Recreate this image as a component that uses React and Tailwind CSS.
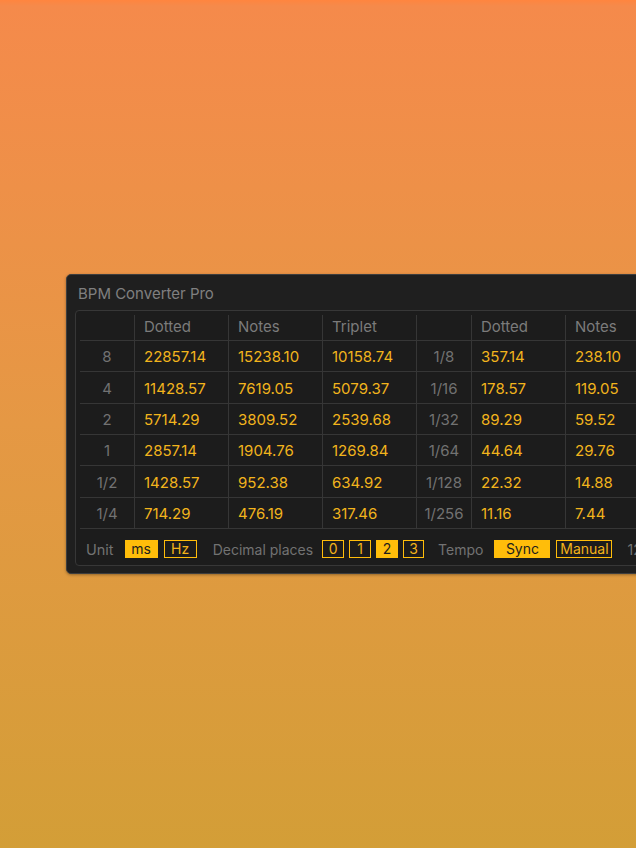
import React from "react";

const FONT = { fontFamily: "Inter, 'Noto Sans', 'Liberation Sans', sans-serif" };

const headers = ["", "Dotted", "Notes", "Triplet", "", "Dotted", "Notes", "Triplet"];

const rows = [
  ["8", "22857.14", "15238.10", "10158.74", "1/8", "357.14", "238.10", "158.73"],
  ["4", "11428.57", "7619.05", "5079.37", "1/16", "178.57", "119.05", "79.37"],
  ["2", "5714.29", "3809.52", "2539.68", "1/32", "89.29", "59.52", "39.68"],
  ["1", "2857.14", "1904.76", "1269.84", "1/64", "44.64", "29.76", "19.84"],
  ["1/2", "1428.57", "952.38", "634.92", "1/128", "22.32", "14.88", "9.92"],
  ["1/4", "714.29", "476.19", "317.46", "1/256", "11.16", "7.44", "4.96"],
];

const isLabel = (i) => i === 0 || i === 4;

function Toggle({ on, children, w }) {
  return (
    <div
      className={
        "flex h-[18px] items-center justify-center border-[1.5px] border-[#ffbd0a] text-[14px] leading-none " +
        w +
        (on ? " bg-[#ffbd0a] text-[#1d1d1d]" : " text-[#f2b31a]")
      }
    >
      {children}
    </div>
  );
}

export default function App() {
  return (
    <div
      style={FONT}
      className="flex min-h-[848px] w-full overflow-hidden bg-[linear-gradient(to_bottom,#ff853f_0px,#f58a4b_6px,#e59844_50%,#d39e37_100%)] pl-[66px] pt-[274px]"
    >
      <div className="h-[300px] w-[760px] shrink-0 rounded-[5px] border border-[#3e3e3e] bg-[#1f1f1f] shadow-[0_1px_3px_rgba(0,0,0,0.35)]">
        <div className="flex h-[35px] items-center pl-[11px] pt-[3px] text-[15px] text-[#808080]">
          BPM Converter Pro
        </div>
        <div className="ml-[8px] h-[256px] rounded-[4px] border border-[#373737] bg-[#1c1c1c] px-[4px] pt-[4px]">
          <div className="grid grid-cols-[55px_94px_94px_94px_55px_94px_94px_94px]">
            {headers.map((h, i) => (
              <div
                key={"h" + i}
                className={
                  "flex h-[26px] items-center border-b border-r border-[#363636] text-[15px] text-[#7b7b7b] " +
                  (isLabel(i) ? "justify-center" : "pl-[9px]")
                }
              >
                {h}
              </div>
            ))}
            {rows.map((r, ri) =>
              r.map((c, ci) => (
                <div
                  key={ri + "-" + ci}
                  className={
                    "flex h-[31.33px] items-center border-b border-r border-[#363636] pt-[3px] text-[15px] " +
                    (isLabel(ci) ? "justify-center text-[#727272]" : "pl-[9px] text-[#f2b41c]")
                  }
                >
                  {c}
                </div>
              ))
            )}
          </div>
          <div className="flex h-[37px] items-center whitespace-nowrap pl-[6px] pt-[4px] text-[14px] text-[#727272]">
            <span className="text-[14.5px]">Unit</span>
            <div className="ml-[11px] flex gap-[6px]">
              <Toggle on w="w-[33px]">ms</Toggle>
              <Toggle w="w-[33px]">Hz</Toggle>
            </div>
            <span className="ml-[16px]">Decimal places</span>
            <div className="ml-[9px] flex gap-[5px]">
              <Toggle w="w-[22px]">0</Toggle>
              <Toggle w="w-[22px]">1</Toggle>
              <Toggle on w="w-[22px]">2</Toggle>
              <Toggle w="w-[21px]">3</Toggle>
            </div>
            <span className="ml-[14px]">Tempo</span>
            <div className="ml-[11px] flex gap-[6px]">
              <Toggle on w="w-[56px]">Sync</Toggle>
              <Toggle w="w-[56px]">Manual</Toggle>
            </div>
            <span className="ml-[15px]">120.00 BPM</span>
          </div>
        </div>
      </div>
    </div>
  );
}
